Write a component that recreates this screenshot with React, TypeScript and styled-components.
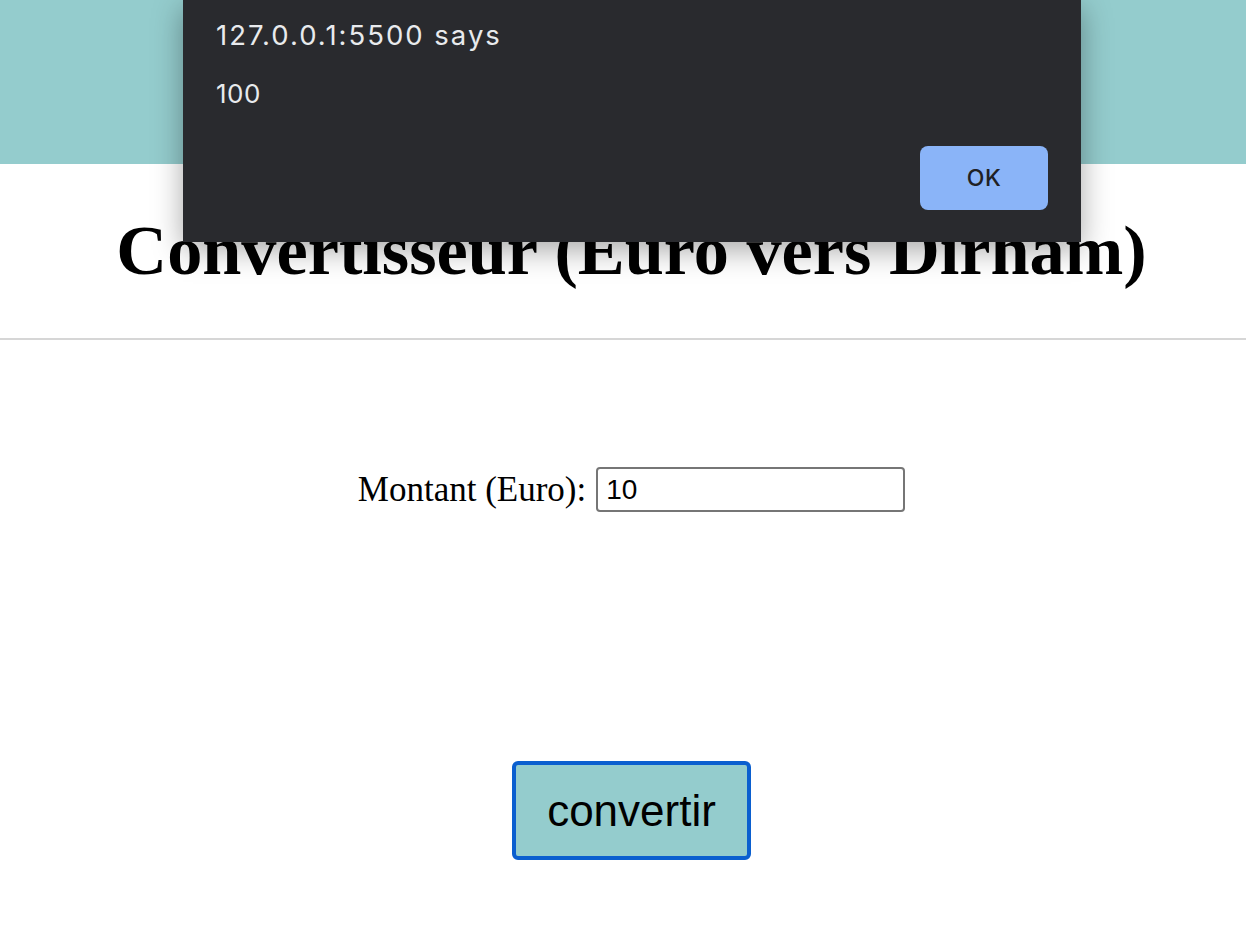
import React from "react";
import styled, { createGlobalStyle } from "styled-components";

const Global = createGlobalStyle`
  html, body { margin: 0; padding: 0; background: #ffffff; }
  body { font-family: "Liberation Serif", "Times New Roman", serif; }
`;

const Page = styled.div`
  position: relative;
  width: 1246px;
  min-height: 948px;
  overflow: hidden;
`;

const Header = styled.header`
  height: 164px;
  background: #94cccd;
`;

const Title = styled.h1`
  margin: 46px 0 0;
  padding-left: 17px;
  text-align: center;
  font-family: "Liberation Serif", "Times New Roman", serif;
  font-weight: 700;
  font-size: 70.3px;
  line-height: 80px;
  color: #000;
`;

const Divider = styled.hr`
  margin: 48px 0 0;
  border: none;
  height: 2px;
  background: #d6d6d6;
`;

const Form = styled.form`
  display: flex;
  flex-direction: column;
  align-items: center;
  padding-top: 127px;
  padding-left: 17px;
`;

const Row = styled.div`
  display: flex;
  align-items: center;
  gap: 10px;
`;

const Label = styled.label`
  font-family: "Liberation Serif", "Times New Roman", serif;
  font-size: 35px;
  color: #000;
`;

const Input = styled.input`
  box-sizing: border-box;
  width: 309px;
  height: 45px;
  padding: 0 8px;
  border: 2px solid #767676;
  border-radius: 4px;
  font-family: "Liberation Sans", Arial, sans-serif;
  font-size: 28px;
  color: #000;
  background: #fff;
  outline: none;
`;

const Convert = styled.button`
  box-sizing: border-box;
  margin-top: 249px;
  width: 239px;
  height: 99px;
  background: #94cccd;
  border: 4px solid #0a5fcf;
  border-radius: 6px;
  font-family: "Liberation Sans", Arial, sans-serif;
  font-size: 44px;
  color: #000;
  padding: 0;
  cursor: pointer;
`;

const Dialog = styled.div`
  position: absolute;
  top: 0;
  left: 183px;
  width: 898px;
  height: 242px;
  box-sizing: border-box;
  padding: 16px 33px 0;
  background: #292a2e;
  box-shadow: 0 8px 28px rgba(0, 0, 0, 0.35);
  font-family: Inter, "Noto Sans", sans-serif;
  color: #e8eaed;
  display: flex;
  flex-direction: column;
`;

const DialogTitle = styled.div`
  font-size: 27.5px;
  letter-spacing: 2px;
  line-height: 38px;
`;

const DialogMessage = styled.div`
  font-size: 26px;
  letter-spacing: 0.5px;
  line-height: 36px;
  margin-top: 22px;
`;

const DialogActions = styled.div`
  display: flex;
  justify-content: flex-end;
  margin-top: 34px;
`;

const OkButton = styled.button`
  width: 128px;
  height: 64px;
  border: none;
  border-radius: 8px;
  background: #8ab4f8;
  color: #202124;
  font-family: Inter, "Noto Sans", sans-serif;
  font-size: 23px;
  font-weight: 500;
  letter-spacing: 0.5px;
`;

export default function App() {
  return (
    <Page>
      <Global />
      <Header />
      <Title>Convertisseur (Euro vers Dirham)</Title>
      <Divider />
      <Form onSubmit={(e) => e.preventDefault()}>
        <Row>
          <Label htmlFor="montant">Montant (Euro):</Label>
          <Input id="montant" defaultValue="10" />
        </Row>
        <Convert type="button">convertir</Convert>
      </Form>
      <Dialog>
        <DialogTitle>127.0.0.1:5500 says</DialogTitle>
        <DialogMessage>100</DialogMessage>
        <DialogActions>
          <OkButton type="button">OK</OkButton>
        </DialogActions>
      </Dialog>
    </Page>
  );
}
